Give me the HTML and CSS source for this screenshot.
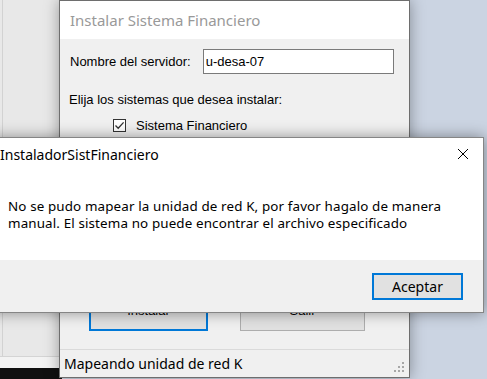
FILE: index.html
```html
<!DOCTYPE html>
<html lang="es">
<head>
    <meta charset="UTF-8">
    <title>Instalar Sistema Financiero</title>
    <link rel="stylesheet" href="styles.css">
</head>
<body>

<div class="desktop">
    <div class="back-window">
        <div class="back-panel"></div>
        <div class="back-strip"></div>
    </div>
    <div class="taskbar"></div>

    <div class="main-window">
        <div class="main-title">Instalar Sistema Financiero</div>
        <div class="main-body">
            <div class="server-row">
                <label for="server">Nombre del servidor:</label>
                <input type="text" id="server" value="u-desa-07">
            </div>
            <div class="choose-text">Elija los sistemas que desea instalar:</div>
            <div class="check-row">
                <span class="checkbox">
                    <svg width="11" height="11" viewBox="0 0 11 11"><path d="M1.5 5.5 L4.2 8.3 L9.6 2.4" fill="none" stroke="#333" stroke-width="1.3"/></svg>
                </span>
                <span>Sistema Financiero</span>
            </div>
            <div class="button-row">
                <button class="win-button default">Instalar</button>
                <button class="win-button">Salir</button>
            </div>
        </div>
        <div class="status-bar">
            <span>Mapeando unidad de red K</span>
            <svg class="grip" width="11" height="12" viewBox="0 0 11 12">
                <rect x="8" y="1" width="2" height="2" fill="#a7a7a7"/>
                <rect x="4" y="5" width="2" height="2" fill="#a7a7a7"/>
                <rect x="8" y="5" width="2" height="2" fill="#a7a7a7"/>
                <rect x="0" y="9" width="2" height="2" fill="#a7a7a7"/>
                <rect x="4" y="9" width="2" height="2" fill="#a7a7a7"/>
                <rect x="8" y="9" width="2" height="2" fill="#a7a7a7"/>
            </svg>
        </div>
    </div>

    <div class="msg-box">
        <div class="msg-title">
            <span>InstaladorSistFinanciero</span>
            <svg class="close-icon" width="12" height="12" viewBox="0 0 12 12"><path d="M1 1 L11 11 M11 1 L1 11" stroke="#000" stroke-width="1"/></svg>
        </div>
        <div class="msg-text">
            <p>No se pudo mapear la unidad de red K, por favor hagalo de manera</p>
            <p>manual. El sistema no puede encontrar el archivo especificado</p>
        </div>
        <div class="msg-footer">
            <button class="win-button default accept">Aceptar</button>
        </div>
    </div>
</div>

</body>
</html>
```

FILE: styles.css
```css
body {
    margin: 0;
    overflow: hidden;
    font-family: "Liberation Sans", Arial, sans-serif;
}
.desktop {
    position: relative;
    width: 487px;
    height: 379px;
    background: #cbd4e2;
    overflow: hidden;
}
.back-window {
    position: absolute;
    left: 0;
    top: 0;
    width: 62px;
    height: 368px;
    background: #e8e8e8;
}
.back-panel {
    position: absolute;
    left: 2px;
    top: 0;
    width: 60px;
    height: 356px;
    border-left: 1px solid #d2d2d2;
}
.back-strip {
    position: absolute;
    left: 0;
    top: 356px;
    width: 62px;
    height: 12px;
    border-top: 1px solid #d4d4d4;
    background: #f3f3f3;
}
.taskbar {
    position: absolute;
    left: 0;
    top: 368px;
    width: 62px;
    height: 11px;
    background: #101010;
}

/* ventana principal */
.main-window {
    position: absolute;
    left: 59px;
    top: 0;
    width: 351px;
    height: 378px;
    box-sizing: border-box;
    border: 1px solid #6e6e6e;
    background: #f0f0f0;
    box-shadow: 0 0 14px rgba(0, 0, 0, 0.35);
    display: flex;
    flex-direction: column;
}
.main-title {
    height: 38px;
    background: #fff;
    color: #999;
    font-family: "Noto Sans", sans-serif;
    font-size: 15px;
    line-height: 38px;
    padding-left: 10px;
}
.main-body {
    flex: 1;
    padding: 10px 0 0 10px;
    font-size: 13px;
    color: #000;
}
.server-row {
    display: flex;
    align-items: center;
    gap: 12px;
}
.server-row input {
    width: 191px;
    height: 25px;
    box-sizing: border-box;
    border: 1px solid #7a7a7a;
    padding: 0 2px;
    font-family: "Liberation Sans", Arial, sans-serif;
    font-size: 13px;
    color: #000;
    outline: none;
}
.choose-text {
    margin-top: 18px;
    margin-left: -1px;
    line-height: 15px;
}
.check-row {
    display: flex;
    align-items: center;
    gap: 10px;
    margin-top: 11px;
    margin-left: 43px;
}
.checkbox {
    width: 13px;
    height: 13px;
    box-sizing: border-box;
    border: 1px solid #333;
    background: #fff;
    display: flex;
    align-items: center;
    justify-content: center;
}
.button-row {
    display: flex;
    gap: 32px;
    margin-top: 156px;
    margin-left: 19px;
}
.win-button {
    height: 42px;
    box-sizing: border-box;
    border: 1px solid #adadad;
    background: #e1e1e1;
    font-family: "Liberation Sans", Arial, sans-serif;
    font-size: 13px;
    color: #000;
    padding: 0;
}
.button-row .win-button {
    width: 125px;
}
.button-row .default {
    width: 119px;
}
.win-button.default {
    border: 2px solid #0078d7;
}
.status-bar {
    height: 27px;
    border-top: 1px solid #dadada;
    display: flex;
    align-items: center;
    justify-content: space-between;
    padding: 0 4px 0 4px;
    font-family: "Noto Sans", sans-serif;
    font-size: 14px;
    color: #000;
}
.grip {
    margin-top: 6px;
}

/* cuadro de mensaje */
.msg-box {
    position: absolute;
    left: -9px;
    top: 137px;
    width: 493px;
    height: 176px;
    box-sizing: border-box;
    border: 1px solid #858585;
    background: #fff;
    box-shadow: 0 0 14px rgba(0, 0, 0, 0.4);
    display: flex;
    flex-direction: column;
    font-family: "Noto Sans", sans-serif;
}
.msg-title {
    height: 32px;
    display: flex;
    align-items: center;
    justify-content: space-between;
    padding: 0 14px 0 8px;
    font-size: 14px;
    color: #000;
}
.msg-text {
    flex: 1;
    padding: 28px 0 0 16px;
    font-size: 13.4px;
    color: #000;
}
.msg-text p {
    margin: 0;
    line-height: 17px;
    letter-spacing: 0.13px;
}
.msg-footer {
    height: 52px;
    background: #f0f0f0;
    display: flex;
    align-items: center;
    justify-content: flex-end;
    padding-right: 20px;
}
.win-button.accept {
    width: 91px;
    height: 27px;
    font-family: "Noto Sans", sans-serif;
    font-size: 14px;
}
```
